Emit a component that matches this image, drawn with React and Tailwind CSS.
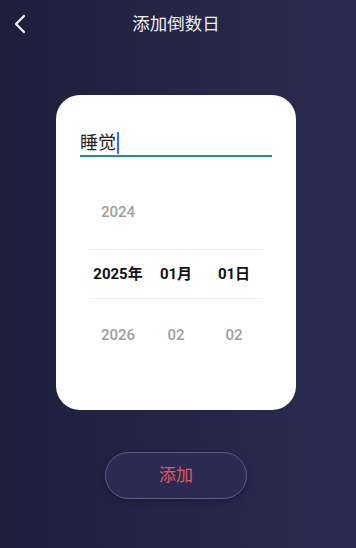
import React from 'react'

const font = { fontFamily: 'Roboto, "Noto Sans CJK SC", sans-serif' }

const columns = [
  { prev: '2024', cur: '2025年', next: '2026' },
  { prev: '', cur: '01月', next: '02' },
  { prev: '', cur: '01日', next: '02' },
]

const PickerRow = ({ field, className }) => (
  <div className="grid grid-cols-3 h-full items-center">
    {columns.map((c, i) => (
      <div key={i} className={'text-center ' + className}>
        {c[field]}
      </div>
    ))}
  </div>
)

export default function App() {
  return (
    <div
      className="w-[356px] h-[548px] pr-[4px] bg-gradient-to-r from-[#1e1f3d] to-[#2a2b51] flex flex-col items-center overflow-hidden"
      style={font}
    >
      {/* Header */}
      <div className="relative w-full h-[48px] flex items-center justify-center">
        <button className="absolute left-[8px] top-[12px] w-[24px] h-[24px] flex items-center justify-center">
          <svg width="14" height="20" viewBox="0 0 14 20" fill="none">
            <path d="M11 2 L3 10 L11 18" stroke="#f2f2f5" strokeWidth="2.2" strokeLinecap="round" strokeLinejoin="round" />
          </svg>
        </button>
        <h1 className="text-[17.5px] text-[#f0f0f4]">添加倒数日</h1>
      </div>

      {/* Card */}
      <div className="mt-[47px] w-[240px] h-[315px] bg-white rounded-[24px] px-[24px] pt-[36px]">
        <div className="flex items-center h-[26px] border-b-2 border-[#2b8a82]">
          <span className="text-[18px] text-[#222] leading-none">睡觉</span>
          <span className="ml-[1px] w-[2px] h-[22px] bg-[#3b6fd8]" />
        </div>

        <div className="mx-[9px] mt-[25px]">
          <div className="h-[61px]">
            <PickerRow field="prev" className="text-[15px] font-medium text-[#9e9e9e]" />
          </div>
          <div className="h-[62px] py-[6px]">
            <div className="h-[50px] border-y border-[#ececec]">
              <PickerRow field="cur" className="text-[15px] font-bold text-[#111]" />
            </div>
          </div>
          <div className="h-[61px]">
            <PickerRow field="next" className="text-[15px] font-medium text-[#9e9e9e]" />
          </div>
        </div>
      </div>

      {/* Button */}
      <button className="mt-[42px] w-[142px] h-[47px] rounded-full border border-[#5e5f80] bg-[#2a2b52] text-[#e2595d] text-[17px] shadow-[0_2px_6px_rgba(0,0,0,0.25)]">
        添加
      </button>
    </div>
  )
}
